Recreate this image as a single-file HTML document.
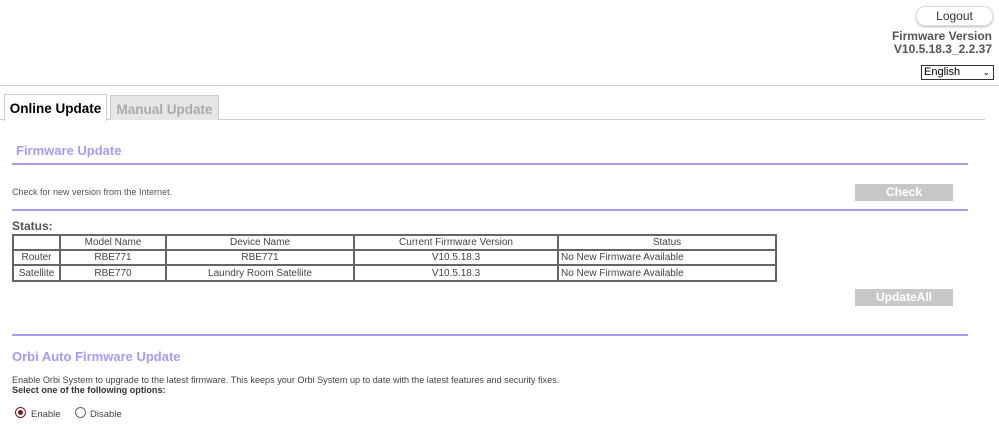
<!DOCTYPE html><html><head><style>
body{margin:0;width:999px;height:429px;position:relative;font-family:"Liberation Sans",sans-serif;background:#fff;overflow:hidden;color:#444}
.a{position:absolute}
.pl{position:absolute;left:12px;width:956px;height:2px;background:#a79cf0}
.btn{position:absolute;left:855px;width:98px;height:17px;background:#c8c8c8;color:#fff;font-weight:bold;font-size:12px;text-align:center;line-height:17px}
table{position:absolute;left:12px;top:234px;width:763px;table-layout:fixed;border-collapse:collapse;font-size:10px;color:#444}
td{border:2px solid #666;height:13px;padding:0 2px;text-align:center;line-height:13px;white-space:nowrap;overflow:hidden}
</style></head><body>
<div class="a" style="left:916px;top:6px;width:75px;height:18px;border:1px solid #ddd;border-radius:9px;box-shadow:0 1px 2px #bbb;font-size:12px;text-align:center;line-height:18px;color:#333">Logout</div>
<div class="a" style="right:7px;top:30px;font-size:12px;font-weight:bold;text-align:right;line-height:13px;color:#555">Firmware Version<br>V10.5.18.3_2.2.37</div>
<div class="a" style="left:921px;top:65px;width:69px;height:13px;border:1px solid #333;font-size:11px;line-height:13px;color:#000;padding-left:2px">English<span style="position:absolute;right:3px;font-size:9px">⌄</span></div>
<div class="a" style="left:0;top:85px;width:999px;height:1px;background:#ccc"></div>
<div class="a" style="left:0;top:119px;width:985px;height:1px;background:#ccc"></div>
<div class="a" style="left:4px;top:94px;width:101px;height:26px;border:1px solid #ccc;border-bottom:none;background:#fff;font-size:13.5px;font-weight:bold;color:#000;text-align:center;line-height:28px">Online Update</div>
<div class="a" style="left:110px;top:95px;width:107px;height:24px;border:1px solid #ccc;border-bottom:none;background:#e6e6e6;font-size:13.5px;font-weight:bold;color:#aaa;text-align:center;line-height:27px">Manual Update</div>
<div class="a" style="left:16px;top:143px;font-size:13px;font-weight:bold;color:#a79cf0">Firmware Update</div>
<div class="pl" style="top:163px"></div>
<div class="a" style="left:12px;top:187px;font-size:9px;color:#555">Check for new version from the Internet.</div>
<div class="btn" style="top:184px">Check</div>
<div class="pl" style="top:209px"></div>
<div class="a" style="left:12px;top:219px;font-size:12px;font-weight:bold;color:#555">Status:</div>
<table>
<colgroup><col style="width:47px"><col style="width:106px"><col style="width:188px"><col style="width:204px"><col style="width:218px"></colgroup>
<tr><td></td><td>Model Name</td><td>Device Name</td><td>Current Firmware Version</td><td>Status</td></tr>
<tr><td>Router</td><td>RBE771</td><td>RBE771</td><td>V10.5.18.3</td><td style="text-align:left">No New Firmware Available</td></tr>
<tr><td style="height:14px">Satellite</td><td>RBE770</td><td>Laundry Room Satellite</td><td>V10.5.18.3</td><td style="text-align:left">No New Firmware Available</td></tr>
</table>
<div class="btn" style="top:289px">UpdateAll</div>
<div class="pl" style="top:334px"></div>
<div class="a" style="left:12px;top:349px;font-size:13px;font-weight:bold;color:#a79cf0">Orbi Auto Firmware Update</div>
<div class="a" style="left:12px;top:375px;font-size:9.1px;color:#444;line-height:10px">Enable Orbi System to upgrade to the latest firmware. This keeps your Orbi System up to date with the latest features and security fixes.<br><b style="color:#333">Select one of the following options:</b></div>
<div class="a" style="left:15px;top:407px;width:9px;height:9px;border:1px solid #7a1a2a;border-radius:50%"><div style="margin:2px;width:5px;height:5px;border-radius:50%;background:#7a1a2a"></div></div>
<div class="a" style="left:31px;top:409px;font-size:9.5px">Enable</div>
<div class="a" style="left:75px;top:407px;width:9px;height:9px;border:1px solid #666;border-radius:50%"></div>
<div class="a" style="left:90px;top:409px;font-size:9.5px">Disable</div>
</body></html>
